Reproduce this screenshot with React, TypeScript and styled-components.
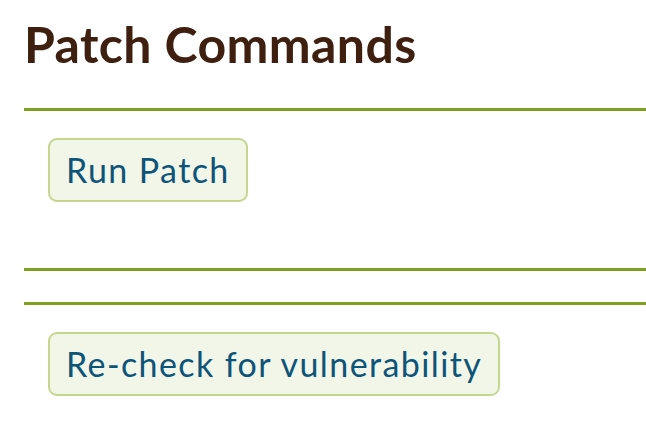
import React from "react";
import styled, { createGlobalStyle } from "styled-components";

const GlobalStyle = createGlobalStyle`
  html, body {
    margin: 0;
    padding: 0;
    background: #ffffff;
    overflow: hidden;
  }
  body {
    font-family: Lato, "Open Sans", "Liberation Sans", sans-serif;
  }
`;

const Page = styled.div`
  width: 646px;
  height: 432px;
  padding-left: 24px;
  box-sizing: border-box;
  overflow: hidden;
`;

const Title = styled.h1`
  margin: 0;
  padding-top: 14px;
  height: 108px;
  box-sizing: border-box;
  font-size: 50px;
  font-weight: 700;
  letter-spacing: 0.4px;
  line-height: 60px;
  color: #3f2010;
`;

const Section = styled.section<{ $height?: number }>`
  border-top: 3px solid #7fa11f;
  padding: 27px 24px 0;
  height: ${(p) => (p.$height ? `${p.$height}px` : "auto")};
  box-sizing: border-box;
`;

const Divider = styled.div`
  border-top: 3px solid #7fa11f;
  height: 34px;
  box-sizing: border-box;
`;

const CommandButton = styled.button`
  display: inline-block;
  height: 64px;
  padding: 0 16px;
  border: 2px solid #c6d68e;
  border-radius: 9px;
  background: #f2f6e9;
  color: #0d5478;
  font-family: Lato, "Open Sans", "Liberation Sans", sans-serif;
  font-size: 34px;
  font-weight: 400;
  letter-spacing: 1.4px;
  line-height: 58px;
  cursor: pointer;
`;

export default function App() {
  return (
    <>
      <GlobalStyle />
      <Page>
        <Title>Patch Commands</Title>
        <Section $height={160}>
          <CommandButton>Run Patch</CommandButton>
        </Section>
        <Divider />
        <Section>
          <CommandButton>Re-check for vulnerability</CommandButton>
        </Section>
      </Page>
    </>
  );
}
